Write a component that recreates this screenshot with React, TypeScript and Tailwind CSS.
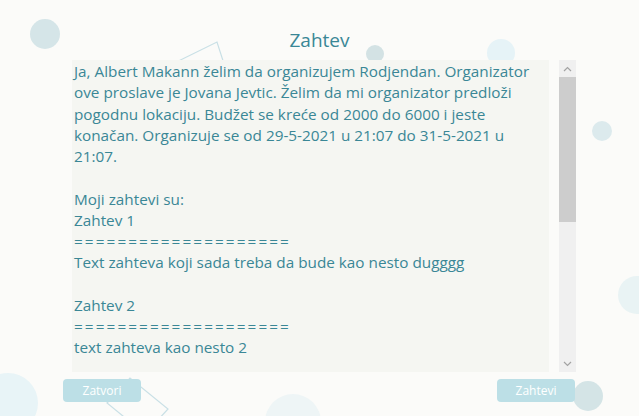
import React from "react";

const lines = [
  "Ja, Albert Makann želim da organizujem Rodjendan. Organizator",
  "ove proslave je Jovana Jevtic. Želim da mi organizator predloži",
  "pogodnu lokaciju. Budžet se kreće od 2000 do 6000 i jeste",
  "konačan. Organizuje se od 29-5-2021 u 21:07 do 31-5-2021 u",
  "21:07.",
  "",
  "Moji zahtevi su:",
  "Zahtev 1",
  "====================",
  "Text zahteva koji sada treba da bude kao nesto dugggg",
  "",
  "Zahtev 2",
  "====================",
  "text zahteva kao nesto 2",
];

const Backdrop = () => (
  <svg className="absolute inset-0 z-0" width="639" height="416" viewBox="0 0 639 416">
    <circle cx="45" cy="34" r="15" fill="#d5e5e8" />
    <circle cx="375" cy="54" r="9" fill="#d3e2e4" />
    <circle cx="501" cy="53" r="14" fill="#e6f3f7" />
    <circle cx="602" cy="131" r="10" fill="#dceaed" />
    <circle cx="637" cy="295" r="19" fill="#e9f3f4" />
    <circle cx="588" cy="396" r="15" fill="#d4e4e6" />
    <circle cx="8" cy="403" r="30" fill="#e8f4f7" />
    <circle cx="293" cy="422" r="28" fill="#eef5f6" />
    <polyline points="150,75 217,42 226,70" fill="none" stroke="#c9e0e6" strokeWidth="1.2" />
    <polygon points="107,403 130,378 168,409 145,434" fill="none" stroke="#c9e0e6" strokeWidth="1.2" />
  </svg>
);

const Chevron = ({ up }: { up?: boolean }) => (
  <svg width="9" height="6" viewBox="0 0 9 6">
    <polyline
      points={up ? "1,5 4.5,1.5 8,5" : "1,1 4.5,4.5 8,1"}
      fill="none"
      stroke="#a3a3a3"
      strokeWidth="1.2"
    />
  </svg>
);

export default function App() {
  return (
    <div className="relative w-[639px] h-[416px] overflow-hidden bg-[#fbfbf9] font-['Open_Sans',sans-serif]">
      <Backdrop />
      <div className="relative z-10 mx-auto w-[513px] pt-[28px] flex flex-col">
        <h1 className="text-center text-[19px] leading-[24px] text-[#3a8796] mb-[8px]">Zahtev</h1>
        <div className="flex gap-[10px] ml-[9px] h-[312px]">
          <div className="w-[477px] h-full bg-[#f5f6f2] overflow-hidden pl-[2px] pt-[1px] text-[15.3px] leading-[21.25px] text-[#3a8796]">
            {lines.map((l, i) => (
              <div
                key={i}
                className={
                  l.startsWith("=")
                    ? "whitespace-pre h-[21.25px] tracking-[2.1px]"
                    : "whitespace-pre h-[21.25px]"
                }
              >
                {l}
              </div>
            ))}
          </div>
          <div className="w-[17px] h-full bg-[#f0f0f0] flex flex-col">
            <div className="h-[17px] flex items-center justify-center">
              <Chevron up />
            </div>
            <div className="h-[145px] bg-[#cdcdcd]" />
            <div className="flex-1" />
            <div className="h-[17px] flex items-center justify-center">
              <Chevron />
            </div>
          </div>
        </div>
        <div className="flex justify-between mt-[7px] mr-[1px]">
          <button className="w-[78px] h-[23px] rounded-[4px] bg-[#bcdfe6] text-white text-[12px] leading-[23px]">
            Zatvori
          </button>
          <button className="w-[78px] h-[23px] rounded-[4px] bg-[#bcdfe6] text-white text-[12px] leading-[23px]">
            Zahtevi
          </button>
        </div>
      </div>
    </div>
  );
}
